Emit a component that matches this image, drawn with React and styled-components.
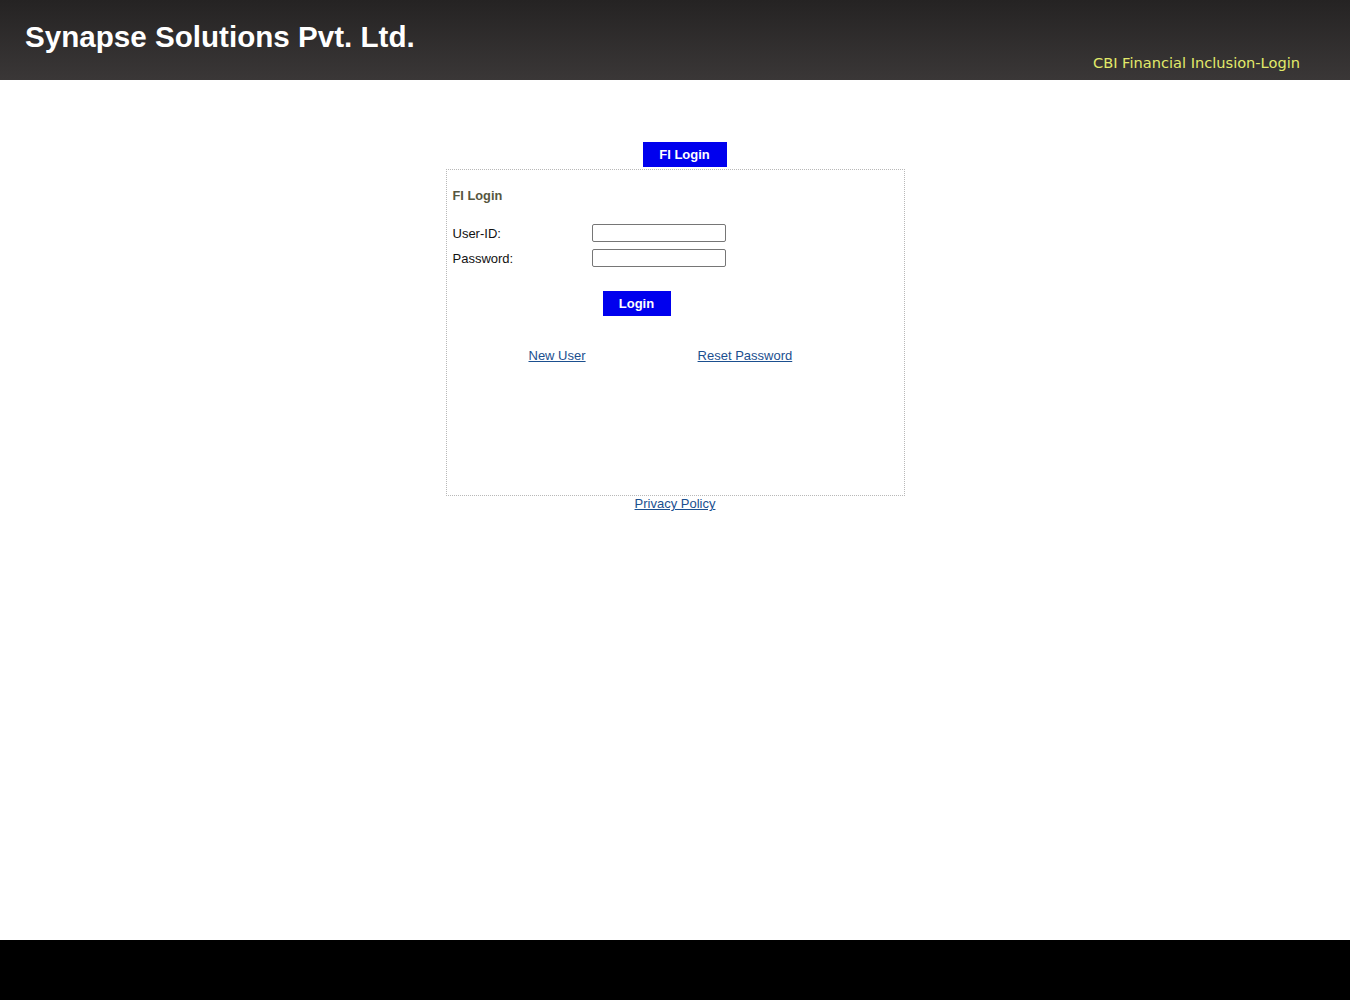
import React from "react";
import styled, { createGlobalStyle } from "styled-components";

const Global = createGlobalStyle`
  html, body { margin: 0; padding: 0; background: #fff; }
  body { font-family: "Liberation Sans", Arial, sans-serif; }
`;

const Page = styled.div`
  display: flex;
  flex-direction: column;
  height: 1000px;
`;

const Header = styled.header`
  height: 80px;
  box-sizing: border-box;
  background: linear-gradient(#252323, #3a3737);
  display: flex;
  justify-content: space-between;
  padding: 0 50px 0 25px;
`;

const Brand = styled.h1`
  margin: 0;
  padding-top: 21px;
  font: bold 29.6px/32px "Liberation Sans", Arial, sans-serif;
  color: #fff;
`;

const SubTitle = styled.div`
  align-self: flex-end;
  padding-bottom: 8px;
  font: 14.6px/18px "DejaVu Sans", Verdana, sans-serif;
  color: #e2ea6a;
`;

const Main = styled.main`
  flex: 1;
  display: flex;
  justify-content: center;
  padding-top: 62px;
`;

const Wrap = styled.div`
  width: 459px;
  display: flex;
  flex-direction: column;
`;

const TabRow = styled.div`
  display: flex;
  padding-left: 197px;
  margin-bottom: 2px;
`;

const BlueButton = styled.button`
  background: #0000ee;
  color: #fff;
  border: none;
  font: bold 13px "Liberation Sans", Arial, sans-serif;
  height: 25px;
  width: ${(p) => p.$w}px;
  padding: 0;
  cursor: pointer;
`;

const Panel = styled.div`
  border: 1px dotted #b8b8b8;
  height: 327px;
  box-sizing: border-box;
  padding: 18px 6px 0 6px;
  display: flex;
  flex-direction: column;
`;

const PanelTitle = styled.div`
  font: bold 12.8px/16px "Liberation Sans", Arial, sans-serif;
  color: #56563e;
  margin-bottom: 17px;
`;

const FieldRow = styled.div`
  display: flex;
  align-items: center;
  height: 25px;
`;

const Label = styled.label`
  width: 139px;
  font: 13px "Liberation Sans", Arial, sans-serif;
  color: #111;
`;

const Input = styled.input`
  width: 134px;
  height: 18px;
  box-sizing: border-box;
  border: 1px solid #767676;
  border-radius: 2px;
  padding: 0 3px;
  margin: 0 0 1px 0;
`;

const ButtonRow = styled.div`
  display: flex;
  padding-left: 150px;
  margin-top: 20px;
`;

const LinkRow = styled.div`
  display: flex;
  margin-top: 32px;
  padding-left: 76px;
  gap: 112px;
`;

const Link = styled.a`
  font: 13px/16px "Liberation Sans", Arial, sans-serif;
  color: #1b4f8f;
  text-decoration: underline;
  cursor: pointer;
`;

const Bottom = styled.div`
  display: flex;
  justify-content: center;
`;

const Footer = styled.footer`
  height: 60px;
  background: #000;
`;

export default function App() {
  return (
    <Page>
      <Global />
      <Header>
        <Brand>Synapse Solutions Pvt. Ltd.</Brand>
        <SubTitle>CBI Financial Inclusion-Login</SubTitle>
      </Header>
      <Main>
        <Wrap>
          <TabRow>
            <BlueButton $w={84}>FI Login</BlueButton>
          </TabRow>
          <Panel>
            <PanelTitle>FI Login</PanelTitle>
            <FieldRow>
              <Label>User-ID:</Label>
              <Input type="text" />
            </FieldRow>
            <FieldRow>
              <Label>Password:</Label>
              <Input type="password" />
            </FieldRow>
            <ButtonRow>
              <BlueButton $w={68}>Login</BlueButton>
            </ButtonRow>
            <LinkRow>
              <Link>New User</Link>
              <Link>Reset Password</Link>
            </LinkRow>
          </Panel>
          <Bottom>
            <Link>Privacy Policy</Link>
          </Bottom>
        </Wrap>
      </Main>
      <Footer />
    </Page>
  );
}
